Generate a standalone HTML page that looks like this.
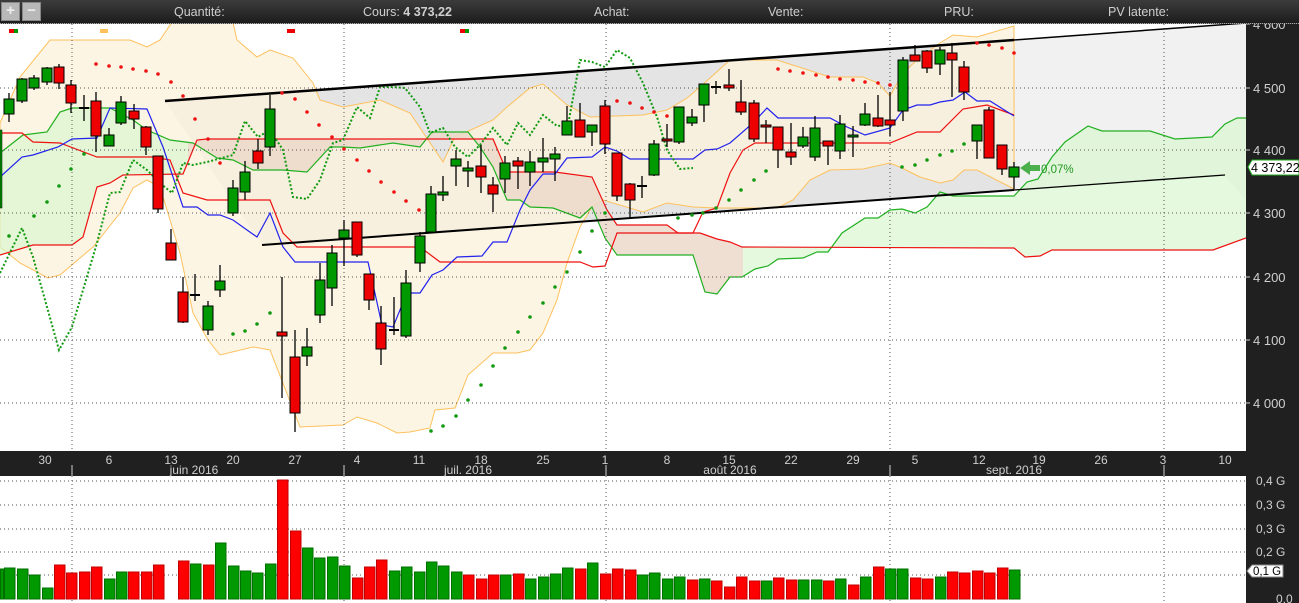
<!DOCTYPE html>
<html><head><meta charset="utf-8"><style>
html,body{margin:0;padding:0;width:1299px;height:603px;overflow:hidden;background:#fff;font-family:"Liberation Sans",sans-serif}
#tb{position:absolute;left:0;top:0;width:1299px;height:24px;background:linear-gradient(#3c3c3c,#1c1c1c);border-bottom:1px dotted #aaa;box-sizing:border-box}
.btn{position:absolute;top:2px;width:17px;height:17px;background:#b8b8b8;border:1px solid #888;color:#eee;font:bold 15px "Liberation Sans",sans-serif;line-height:16px;text-align:center}
.lb{position:absolute;top:5px;font-size:12.5px;color:#cfcfcf;white-space:nowrap}
svg{position:absolute;left:0;top:0}
</style></head><body>
<svg id="s" width="1299" height="603" xmlns="http://www.w3.org/2000/svg" font-family="Liberation Sans, sans-serif">
<defs><clipPath id="ch"><rect x="0" y="24" width="1246" height="427"/></clipPath>
<clipPath id="pk"><rect x="188" y="24" width="555" height="427"/></clipPath></defs>
<g clip-path="url(#ch)" id="main">
<polygon points="165,101 1014,40 1014,190 262,245" fill="#e4e4e4"/>
<polygon points="1014,40 1246,23 1246,200 1225,176 1014,191" fill="#f1f1f1"/>
<polygon fill="#fdf2dc" fill-opacity="0.8" stroke="#fdc15e" stroke-width="1" points="0,123 20,77 50,40 130,40 147,47 160,40 180,10 230,10 237,40 257,57 270,50 293,58 313,83 320,100 343,107 380,100 410,113 443,162 455,137 493,120 507,107 530,88 543,84 567,105 590,117 643,115 667,110 687,98 700,87 730,60 777,60 830,77 863,77 878,83 890,96 903,73 917,60 940,43 953,35 977,37 1014,26 1014,189 977,170 964,170 953,180 940,183 920,177 902,168 890,163 863,169 830,170 810,180 793,200 777,208 717,208 693,207 667,203 643,212 603,200 592,207 580,227 567,263 557,300 543,333 530,350 517,353 493,353 468,375 455,408 435,410 430,428 410,432 397,433 377,423 357,417 343,425 300,427 270,350 253,347 220,355 208,340 193,313 180,253 167,210 160,187 147,180 133,188 120,213 93,247 60,275 48,278 20,263 0,247"/>
<polygon id="cl" fill="#d8f7cf" fill-opacity="0.7" points="0,153 23,135 47,132 60,112 72,108 110,108 133,120 147,130 170,140 193,143 217,158 233,160 253,170 283,170 307,172 330,147 343,147 360,148 393,143 420,147 432,132 468,132 480,147 493,167 507,200 520,200 530,207 553,208 580,218 592,207 605,238 617,255 693,255 705,292 717,294 730,277 742,277 755,269 768,266 778,259 803,258 817,252 828,252 842,233 865,218 878,218 890,210 902,209 915,213 927,207 940,192 953,196 1014,196 1027,182 1038,179 1052,157 1065,142 1088,126 1102,131 1150,131 1175,139 1212,137 1225,124 1237,118 1246,118 1246,238 1213,250 1052,250 1040,256 1025,257 1014,248 742,247 730,242 717,239 700,233 678,233 667,225 617,225 607,210 592,177 555,172 507,172 493,139 207,139 197,140 183,174 123,175 110,183 97,187 83,237 72,245 33,245 0,255"/>
<polygon clip-path="url(#pk)" fill="#f8c8c8" fill-opacity="0.55" points="0,153 23,135 47,132 60,112 72,108 110,108 133,120 147,130 170,140 193,143 217,158 233,160 253,170 283,170 307,172 330,147 343,147 360,148 393,143 420,147 432,132 468,132 480,147 493,167 507,200 520,200 530,207 553,208 580,218 592,207 605,238 617,255 693,255 705,292 717,294 730,277 742,277 755,269 768,266 778,259 803,258 817,252 828,252 842,233 900,200 900,100 742,247 730,242 717,239 700,233 678,233 667,225 617,225 607,210 592,177 555,172 507,172 493,139 207,139 197,140 183,174 123,175 110,183 97,187 83,237 72,245 33,245 0,255"/>
<polyline fill="none" stroke="#22b022" stroke-width="1.2" points="0,153 23,135 47,132 60,112 72,108 110,108 133,120 147,130 170,140 193,143 217,158 233,160 253,170 283,170 307,172 330,147 343,147 360,148 393,143 420,147 432,132 468,132 480,147 493,167 507,200 520,200 530,207 553,208 580,218 592,207 605,238 617,255 693,255 705,292 717,294 730,277 742,277 755,269 768,266 778,259 803,258 817,252 828,252 842,233 865,218 878,218 890,210 902,209 915,213 927,207 940,192 953,196 1014,196 1027,182 1038,179 1052,157 1065,142 1088,126 1102,131 1150,131 1175,139 1212,137 1225,124 1237,118 1246,118"/>
<polyline fill="none" stroke="#ee1111" stroke-width="1.2" points="0,255 33,245 72,245 83,237 97,187 110,183 123,175 183,174 197,140 207,139 493,139 507,172 555,172 592,177 607,210 617,225 667,225 678,233 700,233 717,239 730,242 742,247 1014,248 1025,257 1040,256 1052,250 1213,250 1246,238"/>
<polyline fill="none" stroke="#ee1111" stroke-width="1.2" points="0,133 22,133 33,142 60,143 97,157 153,157 170,160 183,193 207,200 270,200 283,233 297,247 420,247 440,262 580,262 593,267 605,266 617,233 693,233 703,212 717,208 730,173 743,150 755,143 890,143 917,132 940,132 963,109 987,105 1014,115"/>
<polyline fill="none" stroke="#2222ee" stroke-width="1.2" points="0,177 22,157 33,155 58,147 72,139 97,138 110,108 147,109 163,147 183,207 197,207 208,215 220,215 233,220 247,230 257,237 270,213 283,247 295,262 368,262 382,325 393,327 407,293 420,293 432,275 443,270 457,257 482,256 493,242 507,242 520,210 530,190 543,174 555,174 567,158 592,157 605,147 617,151 630,159 693,159 705,150 717,149 730,143 753,123 767,108 778,118 830,118 847,127 865,135 890,128 903,110 917,105 930,105 940,102 953,100 965,92 977,101 990,101 1014,116"/>
<polyline fill="none" stroke="#119911" stroke-width="2" stroke-dasharray="2,2" points="0,273 22,228 33,257 47,307 59,350 72,327 83,290 97,243 110,193 120,192 133,160 147,170 160,183 172,193 183,163 193,165 207,162 233,155 245,121 258,137 270,130 283,150 293,197 307,199 320,180 333,143 343,140 357,107 370,118 380,87 393,87 405,88 420,107 430,133 443,128 455,147 468,157 480,145 493,128 507,145 518,123 530,135 543,115 557,126 568,125 580,60 592,62 605,67 617,50 630,58 643,83 657,117 667,150 680,169 693,168"/>
<g stroke="#555" stroke-width="1" stroke-dasharray="1,3">
<line x1="0" y1="88" x2="1246" y2="88"/><line x1="0" y1="150" x2="1246" y2="150"/><line x1="0" y1="213" x2="1246" y2="213"/><line x1="0" y1="277" x2="1246" y2="277"/><line x1="0" y1="340" x2="1246" y2="340"/><line x1="0" y1="403" x2="1246" y2="403"/>
<line x1="72" y1="24" x2="72" y2="451"/><line x1="344" y1="24" x2="344" y2="451"/><line x1="606" y1="24" x2="606" y2="451"/><line x1="890" y1="24" x2="890" y2="451"/><line x1="1164" y1="24" x2="1164" y2="451"/>
</g>
<line x1="165" y1="101" x2="1014" y2="40" stroke="#000" stroke-width="2.5"/>
<line x1="1014" y1="40" x2="1246" y2="23" stroke="#000" stroke-width="1.5"/>
<line x1="262" y1="245" x2="1014" y2="190" stroke="#000" stroke-width="2"/>
<line x1="1014" y1="190" x2="1225" y2="175" stroke="#000" stroke-width="1.3"/>
<g id="dots"></g>
<g id="cand"></g>
<polygon points="1020,168 1030,161 1030,165 1040,165 1040,171 1030,171 1030,175" fill="#4cb04c"/>
<text x="1041" y="173" font-size="11.5" fill="#229922">0,07%</text>
</g>
<rect x="9" y="29" width="5" height="4" fill="#e00"/><rect x="14" y="29" width="4" height="4" fill="#090"/>
<rect x="100" y="29" width="8" height="4" fill="#fdc15e"/>
<rect x="287" y="29" width="8" height="4" fill="#e00"/>
<rect x="460" y="29" width="5" height="4" fill="#e00"/><rect x="465" y="29" width="4" height="4" fill="#090"/>
<rect x="1246" y="24" width="53" height="579" fill="#202020"/>
<g fill="#cfcfcf" font-size="13">
<text x="1253" y="29">4 600</text><text x="1253" y="93">4 500</text><text x="1253" y="155">4 400</text><text x="1253" y="218">4 300</text><text x="1253" y="282">4 200</text><text x="1253" y="345">4 100</text><text x="1253" y="408">4 000</text>
</g>
<g stroke="#cfcfcf"><line x1="1246" y1="24" x2="1250" y2="24"/><line x1="1246" y1="88" x2="1250" y2="88"/><line x1="1246" y1="150" x2="1250" y2="150"/><line x1="1246" y1="213" x2="1250" y2="213"/><line x1="1246" y1="277" x2="1250" y2="277"/><line x1="1246" y1="340" x2="1250" y2="340"/><line x1="1246" y1="403" x2="1250" y2="403"/></g>
<polygon points="1248,167 1252,160 1299,160 1299,175 1252,175" fill="#fff" stroke="#2a2" stroke-width="1"/>
<text x="1251" y="172" font-size="12.5" fill="#000">4 373,22</text>
<rect x="0" y="451" width="1299" height="25" fill="#202020"/>
<g fill="#cfcfcf" font-size="12" text-anchor="middle">
<text x="45" y="464">30</text><text x="109" y="464">6</text><text x="171" y="464">13</text><text x="233" y="464">20</text><text x="295" y="464">27</text><text x="357" y="464">4</text><text x="419" y="464">11</text><text x="481" y="464">18</text><text x="543" y="464">25</text><text x="605" y="464">1</text><text x="667" y="464">8</text><text x="729" y="464">15</text><text x="791" y="464">22</text><text x="853" y="464">29</text><text x="915" y="464">5</text><text x="979" y="464">12</text><text x="1039" y="464">19</text><text x="1101" y="464">26</text><text x="1163" y="464">3</text><text x="1225" y="464">10</text>
<text x="194" y="474">juin 2016</text><text x="468" y="474">juil. 2016</text><text x="730" y="474">août 2016</text><text x="1014" y="474">sept. 2016</text>
</g>
<g stroke="#cfcfcf"><line x1="72" y1="465" x2="72" y2="476"/><line x1="344" y1="465" x2="344" y2="476"/><line x1="606" y1="465" x2="606" y2="476"/><line x1="890" y1="465" x2="890" y2="476"/><line x1="1164" y1="465" x2="1164" y2="476"/></g>
<g stroke="#555" stroke-width="1" stroke-dasharray="1,3">
<line x1="0" y1="481" x2="1246" y2="481"/><line x1="0" y1="505" x2="1246" y2="505"/><line x1="0" y1="529" x2="1246" y2="529"/><line x1="0" y1="552" x2="1246" y2="552"/><line x1="0" y1="575" x2="1246" y2="575"/>
<line x1="72" y1="476" x2="72" y2="603"/><line x1="344" y1="476" x2="344" y2="603"/><line x1="606" y1="476" x2="606" y2="603"/><line x1="890" y1="476" x2="890" y2="603"/><line x1="1164" y1="476" x2="1164" y2="603"/>
</g>
<g id="vol"></g>
<g fill="#cfcfcf" font-size="12">
<text x="1256" y="485">0,4 G</text><text x="1256" y="509">0,3 G</text><text x="1256" y="533">0,3 G</text><text x="1256" y="556">0,2 G</text><text x="1276" y="603">0,0</text>
</g>
<polygon points="1247,571 1252,565 1283,565 1283,577 1252,577" fill="#fff" stroke="#888"/>
<text x="1253" y="575" font-size="11.5" fill="#000">0,1 G</text>
</svg>
<div id="tb">
<div class="btn" style="left:1px">+</div><div class="btn" style="left:22px">−</div>
<div class="lb" style="left:174px">Quantité:</div>
<div class="lb" style="left:363px">Cours: <b>4 373,22</b></div>
<div class="lb" style="left:594px">Achat:</div>
<div class="lb" style="left:768px">Vente:</div>
<div class="lb" style="left:944px">PRU:</div>
<div class="lb" style="left:1108px">PV latente:</div>
</div>
<script>
var NS="http://www.w3.org/2000/svg";
function el(p,t,a){var e=document.createElementNS(NS,t);for(var k in a)e.setAttribute(k,a[k]);p.appendChild(e);return e;}
var C=[[9,99,114,93,122,'g'],[22,79,101,78,103,'g'],[34,78,88,75,90,'g'],[47,68,82,67,85,'g'],[59,67,83,64,89,'r'],[71,85,103,80,113,'r'],[84,108,108,95,121,'d'],[96,101,136,92,152,'r'],[109,135,146,128,146,'g'],[121,102,123,96,125,'g'],[134,111,119,104,129,'r'],[146,127,147,126,155,'r'],[158,156,209,156,213,'r'],[171,243,260,229,260,'r'],[183,292,322,277,323,'r'],[195,295,295,274,301,'d'],[208,306,330,301,335,'g'],[220,281,290,265,297,'g'],[233,188,213,180,216,'g'],[245,172,192,161,200,'g'],[258,151,163,139,169,'r'],[270,109,147,95,156,'g'],[282,332,336,277,398,'r'],[295,357,413,330,432,'r'],[307,347,356,328,366,'g'],[320,280,315,263,323,'g'],[332,253,288,245,306,'g'],[344,230,238,220,266,'g'],[357,222,255,222,257,'r'],[369,274,300,274,310,'r'],[381,323,349,306,365,'r'],[394,330,330,297,335,'d'],[406,283,336,270,338,'g'],[420,236,263,232,272,'g'],[431,194,232,186,233,'g'],[443,192,195,176,201,'g'],[456,159,166,150,186,'g'],[468,168,171,161,187,'g'],[481,166,177,145,193,'r'],[493,185,194,177,212,'r'],[505,163,179,156,193,'g'],[518,161,166,157,189,'r'],[530,162,172,151,186,'g'],[543,158,162,138,172,'g'],[555,154,159,147,181,'g'],[567,121,135,106,135,'g'],[580,120,137,103,137,'r'],[592,125,132,125,146,'g'],[605,106,144,100,154,'r'],[617,153,196,153,201,'r'],[630,184,200,183,218,'r'],[642,186,186,176,198,'d'],[654,144,175,140,176,'g'],[667,139,140,124,147,'r'],[679,107,142,107,144,'g'],[692,117,123,109,126,'g'],[704,84,105,84,122,'g'],[716,87,87,81,94,'d'],[729,85,88,69,91,'r'],[741,102,112,80,115,'r'],[754,103,139,100,142,'r'],[766,125,127,120,143,'r'],[778,127,150,127,168,'r'],[791,152,157,123,165,'r'],[803,137,146,127,148,'g'],[815,128,157,116,161,'g'],[828,141,146,141,165,'r'],[840,124,151,115,159,'g'],[853,135,137,126,157,'g'],[865,114,125,103,126,'g'],[878,118,126,95,127,'r'],[890,120,125,92,136,'r'],[903,60,111,57,121,'g'],[915,55,61,45,61,'r'],[927,51,68,50,73,'r'],[940,50,64,47,75,'g'],[952,53,60,43,97,'r'],[964,67,92,61,100,'r'],[977,125,141,125,159,'g'],[989,110,158,107,158,'r'],[1002,145,169,145,175,'r'],[1014,167,177,162,189,'g']];
var g=document.getElementById('cand');
el(g,'rect',{x:0,y:130,width:2,height:78,fill:'#090',stroke:'#000','stroke-width':0.5});
C.forEach(function(c){var x=c[0];el(g,'line',{x1:x,y1:c[3],x2:x,y2:c[4],stroke:'#000','stroke-width':1.3});
if(c[5]=='d'){el(g,'line',{x1:x-5,y1:c[1],x2:x+5,y2:c[1],stroke:'#000','stroke-width':2});}
else el(g,'rect',{x:x-5,y:c[1],width:10,height:Math.max(2,c[2]-c[1]),fill:c[5]=='g'?'#009900':'#ee0000',stroke:'#000','stroke-width':1});});
var R=[[96,64],[109,66],[121,67],[133,69],[146,71],[158,74],[171,82],[183,96],[195,119],[208,139],[220,163],[282,93],[295,99],[307,112],[319,125],[332,137],[344,149],[357,160],[369,171],[381,182],[394,192],[406,201],[419,210],[617,101],[630,103],[642,108],[654,112],[667,116],[778,69],[790,71],[803,73],[816,75],[828,77],[840,79],[853,80],[865,82],[878,83],[890,85],[977,43],[989,45],[1002,48],[1014,53]];
var G=[[9,236],[34,216],[47,202],[59,186],[71,169],[84,154],[233,334],[245,331],[257,324],[270,313],[431,431],[443,426],[456,416],[468,400],[481,385],[493,366],[505,348],[518,332],[530,317],[543,303],[555,287],[567,272],[580,252],[592,231],[605,213],[678,218],[692,215],[703,213],[716,208],[729,200],[741,190],[754,180],[766,171],[902,167],[915,165],[927,160],[940,155],[952,151],[964,144]];
var d=document.getElementById('dots');
R.forEach(function(p){el(d,'circle',{cx:p[0],cy:p[1],r:1.8,fill:'#ee1111'});});
G.forEach(function(p){el(d,'circle',{cx:p[0],cy:p[1],r:1.8,fill:'#119911'});});
var V=[[0,569,'g',3],[4,568,'g'],[17,569,'g'],[29,575,'g'],[42,588,'g'],[54,565,'r'],[66,573,'r'],[79,572,'r'],[91,567,'r'],[104,579,'g'],[116,572,'g'],[128,572,'r'],[141,572,'r'],[153,565,'r'],[178,561,'r'],[190,564,'g'],[203,565,'r'],[215,543,'g'],[228,566,'g'],[240,571,'g'],[252,573,'g'],[265,564,'g'],[277,480,'r'],[290,531,'r'],[302,548,'g'],[314,558,'g'],[327,557,'g'],[339,566,'g'],[352,578,'r'],[364,567,'r'],[376,560,'r'],[389,571,'g'],[401,567,'g'],[414,572,'g'],[426,562,'g'],[438,566,'g'],[451,572,'g'],[463,575,'r'],[476,579,'r'],[488,575,'r'],[500,575,'g'],[513,574,'r'],[525,579,'g'],[538,577,'g'],[550,574,'g'],[562,568,'g'],[575,569,'r'],[587,563,'g'],[600,574,'r'],[612,569,'r'],[625,570,'r'],[637,575,'g'],[649,573,'g'],[662,579,'g'],[674,577,'g'],[687,580,'r'],[699,579,'g'],[711,581,'r'],[724,587,'r'],[736,577,'r'],[749,581,'r'],[761,581,'g'],[773,578,'r'],[786,580,'r'],[798,580,'g'],[811,580,'g'],[823,581,'r'],[835,579,'g'],[848,585,'r'],[860,577,'g'],[873,567,'r'],[885,569,'g'],[897,569,'g'],[910,578,'r'],[922,579,'r'],[935,577,'g'],[947,572,'r'],[959,573,'r'],[972,571,'r'],[984,573,'r'],[997,568,'r'],[1009,570,'g']];
var v=document.getElementById('vol');
V.forEach(function(b){el(v,'rect',{x:b[0]+0.5,y:b[1],width:b[3]||10.5,height:599-b[1],fill:b[2]=='g'?'#009900':'#ff0000',stroke:b[2]=='g'?'#006f00':'#c00000','stroke-width':1});});
</script>
</body></html>
